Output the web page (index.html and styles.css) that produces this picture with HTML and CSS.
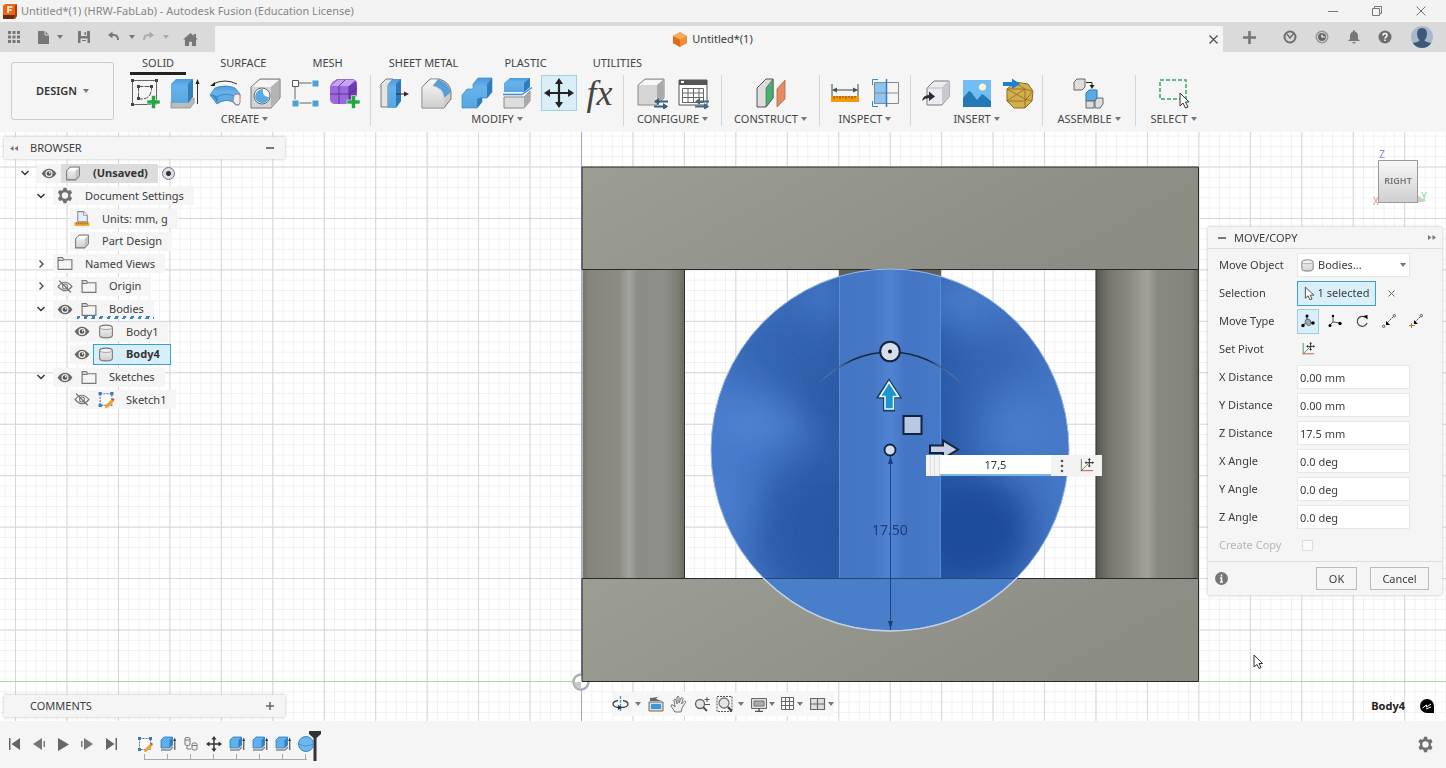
FILE: index.html
```html
<!DOCTYPE html>
<html lang="en">
<head>
<meta charset="utf-8">
<title>Untitled*(1) (HRW-FabLab) - Autodesk Fusion (Education License)</title>
<link rel="stylesheet" href="styles.css">
</head>
<body>
<svg class="sprite" aria-hidden="true">
  <defs>
    <linearGradient id="gBlue" x1="0" y1="0" x2="0" y2="1"><stop offset="0" stop-color="#4a9add"/><stop offset=".3" stop-color="#67b2ea"/><stop offset="1" stop-color="#58a6e2"/></linearGradient>
    <linearGradient id="gGray" x1="0" y1="0" x2="0" y2="1"><stop offset="0" stop-color="#f8f8f8"/><stop offset="1" stop-color="#cfcfcf"/></linearGradient>
  </defs>
  <symbol id="i-caret" viewBox="0 0 6 6"><path d="M0 1h6L3 5z" fill="currentColor"/></symbol>
  <symbol id="i-down" viewBox="0 0 16 16"><path d="M4.500 6l3.500 3.500L11.500 6" fill="none" stroke="#333" stroke-width="1.500"/></symbol>
  <symbol id="i-right" viewBox="0 0 16 16"><path d="M6.500 4.500L10 8l-3.500 3.500" fill="none" stroke="#444" stroke-width="1.300"/></symbol>
  <symbol id="i-eye" viewBox="0 0 16 16"><path d="M1 8q3-4.500 7-4.500T15 8q-3 4.500-7 4.500T1 8z" fill="#666"/><circle cx="8" cy="8" r="3.300" fill="#f5f5f5"/><circle cx="8" cy="8" r="2.200" fill="#555"/><circle cx="8.700" cy="7.300" r=".8" fill="#fff"/></symbol>
  <symbol id="i-hidden" viewBox="0 0 16 16"><path d="M1.500 8Q5 4 8 4t6.500 4Q11 12 8 12T1.500 8z" fill="none" stroke="#777" stroke-width="1.100"/><circle cx="8" cy="8" r="2.300" fill="none" stroke="#777"/><path d="M2.500 2.500l11 11" stroke="#666" stroke-width="1.200"/></symbol>
  <symbol id="i-folder" viewBox="0 0 16 16"><path d="M1.500 13.500v-11h4l1.500 2h7.500v9zM1.500 5h5" fill="none" stroke="#777" stroke-width="1.100"/></symbol>
  <symbol id="i-part" viewBox="0 0 16 16"><path d="M2 5.500L5.500 2H14v8l-3.500 4H2z" fill="url(#gGray)" stroke="#777" stroke-linejoin="round"/><path d="M2.500 5.500L5.500 2.500H13.500L10.500 5.500z" fill="#fff"/><path d="M10.500 5.500L13.500 3v7l-3 3.500z" fill="#c4c4c4"/></symbol>
  <symbol id="i-body" viewBox="0 0 16 16"><path d="M2 4.500Q2 2 8 2t6 2.500v7Q14 14 8 14t-6-2.500z" fill="url(#gGray)" stroke="#777"/><path d="M2.500 5Q4 6.200 8 6.200T13.500 5" fill="none" stroke="#aaa"/></symbol>
  <symbol id="i-units" viewBox="0 0 16 16"><path d="M4 11V1.500h5.500L13 5v6z" fill="#e6eef9" stroke="#889"/><path d="M9.500 1.500V5H13" fill="#fff" stroke="#99a"/><path d="M1 11.500h14v3.500H1z" fill="#f0a72e"/><path d="M3 11.500v2m2-2v2m2-2v2m2-2v2m2-2v2m2-2v2" stroke="#966312"/></symbol>
  <symbol id="i-gear" viewBox="0 0 16 16"><path d="M6.600.8h2.800l.5 2.100 1.300.7 2-.7 1.400 2.400L13.100 7v2l1.500 1.700-1.400 2.400-2-.7-1.300.7-.5 2.100H6.600l-.5-2.100-1.300-.7-2 .7-1.400-2.400L2.900 9V7L1.400 5.300l1.400-2.400 2 .7 1.300-.7z" fill="#707070"/><circle cx="8" cy="8" r="3" fill="#f5f5f5"/></symbol>
  <symbol id="i-sketch" viewBox="0 0 16 16"><path d="M2.500 2.500h11v11h-11z" fill="#fff" stroke="#4a78a8" stroke-dasharray="2 1"/><path d="M1 1h3v3H1zM12 1h3v3h-3zM1 12h3v3H1z" fill="#4078b8"/><path d="M7.500 13.500L13.500 7.500l2 2-5.500 6-3 .5z" fill="#f0a030"/><path d="M13 8l1.500-1.500 1.500 1.500-1 1.500z" fill="#d84848"/></symbol>
  <symbol id="i-pivot" viewBox="0 0 16 16"><path d="M2.500 1v13" stroke="#4a8a4a"/><path d="M2 13.500h13" stroke="#c44"/><path d="M3 13L10 6" stroke="#6a8a6a"/><path d="M11 0l1.500 2H9.500zM11 10l1.500-2h-3zM6 5l2-1.500v3zM16 5l-2-1.500v3z" fill="#222"/><path d="M11 1.500v7M7.500 5h7" stroke="#222"/></symbol>
  <symbol id="i-extrude16" viewBox="0 0 16 16"><path d="M1 14h9l3-3" stroke="#888" stroke-width="1.500" fill="none"/><path d="M1 4l3-3h8.500v8l-3 3H1z" fill="#62aeea" stroke="#287bbd" stroke-width=".8"/><path d="M9.500 4.500L12.500 1v8l-3 3z" fill="#2d7fc2"/><path d="M14.800 14V4" stroke="#333"/><path d="M13.200 5L14.800 1.500 16 5z" fill="#333"/></symbol>
  <symbol id="i-move16" viewBox="0 0 16 16"><path d="M8 2v12M2 8h12" stroke="#333" stroke-width="1.500"/><path d="M8 0l2.500 3.500h-5zM8 16l2.500-3.500h-5zM0 8l3.500-2.500v5zM16 8l-3.500-2.500v5z" fill="#333"/></symbol>
  <symbol id="i-cursor" viewBox="0 0 12 16"><path d="M1.500 1v12l3-2.500 2 4.500 2.300-1-2-4.200h4z" fill="#fff" stroke="#444"/></symbol>
</svg>

<div class="app">
  <header class="titlebar">
    <svg width="14" height="15" viewBox="0 0 14 15"><path d="M0 2L2 0h12v12l-2 3H0z" fill="#ef6411"/><path d="M0 11h12l-1 4H0z" fill="#6b2a12"/><path d="M12 2l2-2v12l-2 3z" fill="#a93d10"/><path d="M5 9V3h4.500M5 6h3.500" stroke="#fff" stroke-width="1.600" fill="none"/></svg>
    <h1>Untitled*(1) (HRW-FabLab) - Autodesk Fusion (Education License)</h1>
    <div class="window-controls">
      <button aria-label="Minimize"><svg width="10" height="10"><path d="M0 5.500h10" stroke="#777"/></svg></button>
      <button aria-label="Restore"><svg width="10" height="10" fill="none" stroke="#777"><path d="M.5 2.500h7v7h-7zM2.500 2.500v-2h7v7h-2"/></svg></button>
      <button aria-label="Close"><svg width="10" height="10"><path d="M.5.500l9 9m0-9l-9 9" stroke="#777"/></svg></button>
    </div>
  </header>

  <div class="tabbar">
    <div class="quick">
      <button aria-label="Data panel"><svg width="12" height="12" fill="#777"><path d="M0 0h3v3H0zM4.500 0h3v3h-3zM9 0h3v3H9zM0 4.500h3v3H0zM4.500 4.500h3v3h-3zM9 4.500h3v3H9zM0 9h3v3H0zM4.500 9h3v3h-3zM9 9h3v3H9z"/></svg></button>
      <button class="file" aria-label="File"><svg width="11" height="13"><path d="M0 0h7l4 4v9H0z" fill="#777"/><path d="M7 0v4h4" stroke="#ddd" fill="none"/></svg><svg class="caret"><use href="#i-caret"/></svg></button>
      <button class="save" aria-label="Save"><svg width="12" height="12"><path d="M0 0h12v12H0z" fill="#777"/><path d="M3 0h6v5H3zM2.500 7.500h7V12h-7z" fill="#ddd"/><path d="M6.500 1h1.500v3H6.500zM4 9h4v1H4z" fill="#777"/></svg></button>
      <button class="undo" aria-label="Undo"><svg width="12" height="12"><path d="M3 4h3q4 0 4 5" stroke="#777" stroke-width="2" fill="none"/><path d="M0 4l4.500-3.500v7z" fill="#777"/></svg><svg class="caret"><use href="#i-caret"/></svg></button>
      <button class="redo" aria-label="Redo"><svg width="12" height="12"><path d="M9 4H6Q2 4 2 9" stroke="#aaa" stroke-width="2" fill="none"/><path d="M12 4L7.500.500v7z" fill="#aaa"/></svg><svg class="caret"><use href="#i-caret"/></svg></button>
      <button class="home" aria-label="Home"><svg width="15" height="13" viewBox="0 0 16 14" fill="#777"><path d="M8 0l8 7h-2v7H9.500V9.500h-3V14H2V7H0zM11.500 1H14v4l-2.500-2z"/></svg></button>
    </div>
    <div class="doc-tab">
      <div class="doc-name"><svg width="14" height="15"><path d="M0 4l7-4 7 4v7l-7 4-7-4z" fill="#f08b32"/><path d="M0 4l7 3.500V15l-7-4z" fill="#e26a1b"/><path d="M0 4l7-4 7 4-7 3.500z" fill="#f9ab5c"/></svg>Untitled*(1)</div>
      <button aria-label="Close tab"><svg width="9" height="9"><path d="M.5.500l8 8m0-8l-8 8" stroke="#555" stroke-width="1.400"/></svg></button>
    </div>
    <div class="account">
      <button class="add" aria-label="New tab"><svg width="13" height="13"><path d="M6.500 0v13M0 6.500h13" stroke="#777" stroke-width="2.600"/></svg></button>
      <button aria-label="Extensions"><svg width="14" height="14"><circle cx="7" cy="7" r="5.500" fill="none" stroke="#6e6e6e" stroke-width="2"/><path d="M4 4l3 4 4-5" stroke="#6e6e6e" stroke-width="1.500" fill="none"/></svg></button>
      <button aria-label="Job status"><svg width="14" height="14"><circle cx="7" cy="7" r="6.500" fill="#999"/><circle cx="7" cy="7" r="4.500" fill="#666" stroke="#ddd"/><path d="M7 4.500V7h3" stroke="#fff" fill="none" stroke-width="1.200"/></svg></button>
      <button aria-label="Notifications"><svg width="12" height="14" fill="#777"><path d="M6 0q1 0 1 1.500Q10 2.500 10 6v3l2 2H0l2-2V6q0-3.500 3-4.500Q5 0 6 0zM4 12h4q-2 3-4 0z"/></svg></button>
      <button aria-label="Help"><svg width="14" height="14"><circle cx="7" cy="7" r="6.500" fill="#6e6e6e"/><path d="M5 5.500Q5 3.500 7 3.500t2 2Q9 6.500 7 8v.5M7 9.500v1.500" stroke="#fff" stroke-width="1.500" fill="none"/></svg></button>
      <button class="avatar" aria-label="Profile"><svg width="22" height="22"><clipPath id="av"><circle cx="11" cy="11" r="11"/></clipPath><g clip-path="url(#av)"><path d="M0 0h22v22H0z" fill="#a9b8ce"/><path d="M11 2q5 0 5 6 0 4-2.500 6 0 2 7.500 3v6H1v-6q7.500-1 7.500-3Q6 12 6 8q0-6 5-6z" fill="#3f5878"/></g></svg></button>
    </div>
  </div>

  <div class="ribbon">
    <button class="workspace">DESIGN <svg class="caret"><use href="#i-caret"/></svg></button>
    <div class="ribbon-main">
      <nav class="tabs">
        <a href="#solid" class="active">SOLID</a><a href="#surface">SURFACE</a><a href="#mesh">MESH</a><a href="#sheet">SHEET METAL</a><a href="#plastic">PLASTIC</a><a href="#utilities">UTILITIES</a>
      </nav>
      <div class="groups">
        <section class="group g-create">
          <div class="tools">
            <button aria-label="Create sketch"><svg viewBox="0 0 32 32"><path d="M3.500 3.500h24v24h-24z" fill="none" stroke="#666"/><path d="M2 2h3v3H2zM26 2h3v3h-3zM2 26h3v3H2z" fill="#444"/><path d="M9.500 9.500h13v3q-1 9-9 9.500h-4z" fill="none" stroke="#555" stroke-dasharray="5 1"/><path d="M8 8h3v3H8zM21 8h3v3h-3zM8 20h3v3H8z" fill="#444"/><path d="M22.500 18.500h4v4.500h4.500v4h-4.500v4.500h-4V27H18v-4h4.500z" fill="#21a845" stroke="#f5f5f5" stroke-width=".6"/></svg></button>
            <button aria-label="Extrude"><svg viewBox="0 0 32 32"><path d="M2 25h18l5-4v5l-4 5H2z" fill="#bbb" stroke="#888" stroke-width=".7"/><path d="M2 7l5-5h17v18l-5 6H2z" fill="url(#gBlue)"/><path d="M19 7l5-5v18l-5 6z" fill="#337fb9"/><path d="M28.500 27V6" stroke="#333"/><path d="M26.500 7l2-5 2 5z" fill="#222"/></svg></button>
            <button aria-label="Revolve"><svg viewBox="0 0 32 32"><path d="M4 7Q16 1 28 7" fill="none" stroke="#333"/><path d="M1 9l5-4v4z" fill="#222"/><path d="M1 18l5-7q10-4 20 0l5 6-1 11q-4 1-6-3-8-4-16 2z" fill="url(#gBlue)" stroke="#3282bd" stroke-width=".8"/><path d="M1 18q5 2 7 8l1-4Q7 17 1 18z" fill="#3c87c4"/><path d="M8 20q8-5 17-1" stroke="#3c87c4" fill="none"/><path d="M25 18q4-2 6 0v8l-2 2q-3 0-5-4z" fill="#eee" stroke="#a66" stroke-width=".8"/></svg></button>
            <button aria-label="Hole"><svg viewBox="0 0 32 32"><path d="M2 10l9-8h20v19l-9 10H2z" fill="#d4d4d4" stroke="#777"/><path d="M3 10l8-7h19l-8 7z" fill="#f5f5f5"/><path d="M22 10l8-7v18l-8 9z" fill="#b4b4b4"/><circle cx="13" cy="19" r="8" fill="#fff" stroke="#666"/><path d="M14 12q-1 8 6 8-1 6-7 6-7-1-7-7 1-6 8-7z" fill="#5aa9e2"/></svg></button>
            <button aria-label="Pattern"><svg viewBox="0 0 32 32"><path d="M6 6h20M6 6v20h20" fill="none" stroke="#666"/><path d="M3.500 3.500h6v6h-6z" fill="#fff" stroke="#555"/><path d="M23 3h7v7h-7zM3 23h7v7H3zM23 23h7v7h-7z" fill="#4f9fd8" stroke="#f5f5f5"/></svg></button>
            <button aria-label="Create form"><svg viewBox="0 0 32 32"><path d="M1 10Q2 5 8 2h16q4 1 4 5v11q-2 6-7 9H5q-4-1-4-5z" fill="#9c68df"/><path d="M3 8l6-5h17l-6 6H3z" fill="#c8a3f2"/><path d="M20 9l7-5q2 12-1 16l-6 5z" fill="#6d3db0"/><path d="M1 17h19l8-6M10 9v18M10 9l6-6M20 9v16" stroke="#57318c" fill="none" stroke-width=".9"/><path d="M22.500 18.500h4v4.500h4.500v4h-4.500v4.500h-4V27H18v-4h4.500z" fill="#21a845" stroke="#f5f5f5" stroke-width=".6"/></svg></button>
          </div>
          <button class="menu">CREATE<svg class="caret"><use href="#i-caret"/></svg></button>
        </section>
        <section class="group g-modify">
          <div class="tools">
            <button aria-label="Press pull"><svg viewBox="0 0 32 32"><path d="M2 7l5-5h7L9 8v22H2z" fill="#e4e4e4" stroke="#777"/><path d="M9 7l5-5h8v22l-5 7H9z" fill="url(#gBlue)"/><path d="M17 7l5-5v22l-5 7z" fill="#2b79b8"/><path d="M17 17h10" stroke="#333"/><path d="M25 14.500l5 2.500-5 2.500z" fill="#422"/></svg></button>
            <button aria-label="Fillet"><svg viewBox="0 0 32 32"><path d="M2 10l8-8h9q11 3 12 13v7l-7 9H2z" fill="#ccc" stroke="#777"/><path d="M2.500 10l8-7.500h7l-5 6.500q10 3 11.500 12v9.500H2.500z" fill="url(#gGray)"/><path d="M18 2.500q11 3 12.500 13l-6 5q-1.500-10-11.500-12z" fill="#579fd9"/></svg></button>
            <button aria-label="Combine"><svg viewBox="0 0 32 32"><path d="M1 18l5-6h6V7l5-6h14v14l-5 6h-5v4l-5 6H1z" fill="url(#gBlue)" stroke="#2d7fbd" stroke-width=".6"/><path d="M26 7l5-6v14l-5 6z" fill="#2f7dbb"/><path d="M16 22l5-2v5l-5 6z" fill="#2f7dbb"/></svg></button>
            <button aria-label="Split body"><svg viewBox="0 0 32 32"><path d="M2 6l6-5h20v9l-6 5H2z" fill="url(#gBlue)"/><path d="M22 6l6-5v9l-6 5z" fill="#2f7dbb"/><path d="M1 17.500h19l10-7" stroke="#3991d4" stroke-width="1.500" fill="none"/><path d="M2 20h20l6-6v10l-6 7H2z" fill="#ddd" stroke="#888"/><path d="M22 20l6-6v10l-6 7z" fill="#aaa"/></svg></button>
            <button class="selected" aria-label="Move/Copy"><svg viewBox="0 0 32 32"><path d="M16 5v22M5 16h22" stroke="#222" stroke-width="2.200"/><path d="M16 1l4 6h-8zM16 31l4-6h-8zM1 16l6-4v8zM31 16l-6-4v8z" fill="#222"/></svg></button>
            <button class="fx" aria-label="Change parameters">fx</button>
          </div>
          <button class="menu">MODIFY<svg class="caret"><use href="#i-caret"/></svg></button>
        </section>
        <section class="group g-pair">
          <div class="tools">
            <button aria-label="Configure"><svg viewBox="0 0 32 32"><path d="M2 8l7-6h19v19l-7 7H2z" fill="#d5d5d5" stroke="#888"/><path d="M3 8l6-5h18l-6 5z" fill="#f6f6f6"/><path d="M21 8l6-5v18l-6 6z" fill="#aaa"/><path d="M19 24.500h13M18 29.500h13" stroke="#38607a" stroke-width="2"/><path d="M23 21v7l-5-3.500zM27 26v7l5-3.500z" fill="#38607a"/></svg></button>
            <button aria-label="Configuration table"><svg viewBox="0 0 32 32"><path d="M2 3h28v25H2z" fill="#fff" stroke="#555"/><path d="M2 3h28v5H2z" fill="#555"/><path d="M4 4h3v2H4z" fill="#fff"/><path d="M5.500 11.500h21v14h-21zM5.500 16h21M5.500 20.500h21M11 11.500v14M16.500 11.500v14M22 11.500v14" fill="none" stroke="#666"/><path d="M19 24.500h13M18 29.500h13" stroke="#456a80" stroke-width="2"/><path d="M23 21v7l-5-3.500zM27 26v7l5-3.500z" fill="#456a80"/></svg></button>
          </div>
          <button class="menu">CONFIGURE<svg class="caret"><use href="#i-caret"/></svg></button>
        </section>
        <section class="group g-pair">
          <div class="tools"><button aria-label="Offset plane"><svg viewBox="0 0 32 32"><path d="M2 11l9-9h7v19l-7 9H2z" fill="#ddd" stroke="#555"/><path d="M11 11l7-9v19l-7 9z" fill="#45b070" stroke="#555" stroke-width=".6"/><path d="M22 12l8-9v19l-8 8z" fill="#e88a5c" stroke="#a65" stroke-width=".8"/></svg></button></div>
          <button class="menu">CONSTRUCT<svg class="caret"><use href="#i-caret"/></svg></button>
        </section>
        <section class="group g-inspect">
          <div class="tools">
            <button aria-label="Measure"><svg viewBox="0 0 32 32"><path d="M3 7v12M29 7v12M4 13h24" stroke="#444"/><path d="M3 13l5-2.500v5zM29 13l-5-2.500v5z" fill="#3a5a45"/><path d="M2 19h28v6H2z" fill="#f49a0d"/><path d="M5 19v3m3-3v2m3-2v3m3-3v2m3-2v3m3-3v2m3-2v3m3-3v2" stroke="#7b4b05"/></svg></button>
            <button aria-label="Section analysis"><svg viewBox="0 0 32 32"><path d="M4 5h12v22H4z" fill="#8cc5f2"/><path d="M4.500 5.500h24v21h-24zM4.500 16h24" fill="none" stroke="#888"/><path d="M16.500 2v28" stroke="#2c7ec0" stroke-width="1.500"/><path d="M2.500 8V2.500H8M2.500 24v5.500H8" stroke="#2c8bd0" fill="none"/></svg></button>
          </div>
          <button class="menu">INSPECT<svg class="caret"><use href="#i-caret"/></svg></button>
        </section>
        <section class="group g-insert">
          <div class="tools">
            <button aria-label="Insert derive"><svg viewBox="0 0 32 32"><path d="M7 11l7-7h15v16l-7 8H7z" fill="#ececf0" stroke="#777"/><path d="M7 11h15l7-7" fill="none" stroke="#bbb"/><path d="M22 11l7-7v16l-7 8z" fill="#c8c8cf"/><path d="M2 24q1-6 7-6v-3.500l6 5-6 4.500v-3q-4 0-7 3z" fill="#2d2d33"/></svg></button>
            <button aria-label="Insert image"><svg viewBox="0 0 32 32"><path d="M2 3h28v27H2z" fill="#72bef4"/><circle cx="21.500" cy="10" r="3.500" fill="#fff6cf"/><path d="M2 21l6-7 2 1 6 8 5-6 3 2 6 5v6H2z" fill="#2378b5"/></svg></button>
            <button aria-label="Insert mesh"><svg viewBox="0 0 32 32"><path d="M5 12l8-7 13 2 5 7-1 10-7 7H12l-7-7z" fill="#d3ae4e" stroke="#8b6b20"/><path d="M5 12h18l7 2M23 12v19M5 12l18 10M5 24h18l7-9M5 24l18-12M23 22l7 2M12 5l11 7" stroke="#8b6b20" stroke-width=".8" fill="none"/><path d="M1 5h9V1.500L18 7l-8 5V9H1z" fill="#1b80d4"/></svg></button>
          </div>
          <button class="menu">INSERT<svg class="caret"><use href="#i-caret"/></svg></button>
        </section>
        <section class="group g-assemble">
          <div class="tools"><button aria-label="New component"><svg viewBox="0 0 32 32"><path d="M1 5l3-3h8v8l-3 3H1z" fill="#ddd" stroke="#666"/><path d="M13 5.500h6v4" fill="none" stroke="#222"/><path d="M16.500 8h5L19 12z" fill="#222"/><path d="M13 16l3-3h8v8l-3 3h-8z" fill="#5aaae4" stroke="#2977b2"/><path d="M13 24h8v7h-8z" fill="#ddd" stroke="#666"/><path d="M22 24l2-3h6v6l-3 4h-5z" fill="#ddd" stroke="#666"/></svg></button></div>
          <button class="menu">ASSEMBLE<svg class="caret"><use href="#i-caret"/></svg></button>
        </section>
        <section class="group g-select">
          <div class="tools"><button aria-label="Select"><svg viewBox="0 0 32 32"><path d="M2 3h26v19H2z" fill="none" stroke="#35a566" stroke-width="1.500" stroke-dasharray="4 2"/><path d="M22 16v13l3-3 2.500 5 2.500-1-2.500-5H31z" fill="#fff" stroke="#333"/></svg></button></div>
          <button class="menu">SELECT<svg class="caret"><use href="#i-caret"/></svg></button>
        </section>
      </div>
    </div>
  </div>

  <main class="viewport">
    <svg class="scene" viewBox="0 132 1446 589" preserveAspectRatio="xMidYMid slice">
      <defs>
        <pattern id="minor" patternUnits="userSpaceOnUse" x="581" y="681" width="10.290" height="10.290"><path d="M0 .5h10.290M.5 0v10.290" stroke="#f1f1f1"/></pattern>
        <pattern id="major" patternUnits="userSpaceOnUse" x="581" y="681" width="51.450" height="51.450"><path d="M0 .5h51.450M.5 0v51.450" stroke="#d6d6d6"/></pattern>
        <linearGradient id="slab" x1="0" y1="0" x2="1" y2=".3"><stop offset="0" stop-color="#9c9d95"/><stop offset="1" stop-color="#8b8c84"/></linearGradient>
        <linearGradient id="pillarL"><stop offset="0" stop-color="#74756e"/><stop offset=".06" stop-color="#86847c"/><stop offset=".36" stop-color="#8d8a83"/><stop offset=".46" stop-color="#a3a49e"/><stop offset=".55" stop-color="#8a8c86"/><stop offset=".8" stop-color="#8c8e87"/><stop offset=".94" stop-color="#7b7d75"/><stop offset="1" stop-color="#68695f"/></linearGradient>
        <linearGradient id="pillarR"><stop offset="0" stop-color="#54554e"/><stop offset=".12" stop-color="#76766e"/><stop offset=".34" stop-color="#8d8a83"/><stop offset=".5" stop-color="#a3a39a"/><stop offset=".6" stop-color="#888981"/><stop offset=".93" stop-color="#83847b"/><stop offset="1" stop-color="#66675e"/></linearGradient>
        <linearGradient id="strip"><stop offset="0" stop-color="#4475c4"/><stop offset=".35" stop-color="#4678c6"/><stop offset=".5" stop-color="#5084d2"/><stop offset=".65" stop-color="#4475c5"/><stop offset="1" stop-color="#4679c8"/></linearGradient>
        <linearGradient id="lobeL" x1="0" y1="0" x2="1" y2="0"><stop offset="0" stop-color="#4679c9"/><stop offset=".4" stop-color="#4173c4"/><stop offset="1" stop-color="#2d5da9"/></linearGradient>
        <linearGradient id="lobeR" x1="0" y1="0" x2="1" y2="0"><stop offset="0" stop-color="#2b5ba8"/><stop offset=".55" stop-color="#3f70bf"/><stop offset="1" stop-color="#477ac9"/></linearGradient>
        <linearGradient id="arcFade"><stop offset="0" stop-color="#b9c8df" stop-opacity="0"/><stop offset=".22" stop-color="#16283f"/><stop offset=".78" stop-color="#16283f"/><stop offset="1" stop-color="#b9c8df" stop-opacity="0"/></linearGradient>
        <clipPath id="disc"><ellipse cx="890" cy="450" rx="179" ry="181"/></clipPath>
        <filter id="soft" x="-60%" y="-60%" width="220%" height="220%"><feGaussianBlur stdDeviation="18"/></filter>
      </defs>
      <rect y="132" width="1446" height="589" fill="#fff"/>
      <rect y="132" width="1446" height="589" fill="url(#minor)"/>
      <rect y="132" width="1446" height="589" fill="url(#major)"/>
      <path d="M0 681.500h1446" stroke="#a4dba4"/>
      <path d="M581.500 132v589" stroke="#a3a1ee"/>
      <circle cx="581" cy="682" r="7.500" fill="#fff" stroke="#aab0b0" stroke-width="2.500"/><path d="M581 682v7a7 7 0 0 1-7-7z" fill="#c5caca"/>
      <rect x="582.500" y="269" width="102" height="309" fill="url(#pillarL)"/>
      <rect x="1096" y="269" width="102" height="309" fill="url(#pillarR)"/>
      <rect x="839" y="269" width="102" height="40" fill="#5f6058"/>
      <path d="M684.500 269v309M1096 269v309M1198.500 269v309" stroke="#33342f"/>
      <path d="M582 167h616.500v102.500H582z" fill="url(#slab)" stroke="#292a27"/>
      <path d="M582 578.500h616.500v103H582z" fill="url(#slab)" stroke="#292a27"/>
      <g clip-path="url(#disc)">
        <path d="M700 260h380v380H700z" fill="#4a7dca"/>
        <path d="M700 260h139v318H700z" fill="url(#lobeL)"/>
        <path d="M941 260h139v318H941z" fill="url(#lobeR)"/>
        <g filter="url(#soft)">
          <ellipse cx="790" cy="350" rx="65" ry="35" fill="#2e5fab" opacity=".7"/>
          <ellipse cx="825" cy="400" rx="35" ry="20" fill="#2858a4" opacity=".9"/>
          <ellipse cx="755" cy="424" rx="48" ry="18" fill="#5287d6"/>
          <ellipse cx="725" cy="500" rx="20" ry="45" fill="#4c80cf"/>
          <ellipse cx="815" cy="530" rx="60" ry="65" fill="#2556a2" opacity=".8"/>
          <ellipse cx="825" cy="295" rx="22" ry="25" fill="#4a7dca"/>
          <ellipse cx="965" cy="300" rx="45" ry="28" fill="#4a7dca"/>
          <ellipse cx="1000" cy="358" rx="40" ry="20" fill="#3262af" opacity=".7"/>
          <ellipse cx="1020" cy="430" rx="35" ry="36" fill="#4a7dcb"/>
          <ellipse cx="970" cy="530" rx="65" ry="52" fill="#1c4c98"/>
          <ellipse cx="1055" cy="530" rx="14" ry="60" fill="#4578c8"/>
        </g>
        <path d="M839 260h102v318H839z" fill="url(#strip)"/>
        <path d="M839.500 269v309M940.500 269v309" stroke="#5d8cd6"/>
        <path d="M700 578h380v60H700z" fill="#497ecb"/>
        <path d="M700 578.500h380" stroke="#26456f"/>
      </g>
      <ellipse cx="890" cy="450" rx="179" ry="181" fill="none" stroke="#9bbbe8"/>
      <path d="M763 578q54 53 127 53t127-53" fill="none" stroke="#c4d2e8" stroke-width="1.500"/>
      <path d="M818 384Q851 352 890 352T962 384" fill="none" stroke="url(#arcFade)" stroke-width="1.500"/>
      <path d="M890.500 456v174" stroke="#1d4382"/>
      <path d="M888 464l2.500-8 2.500 8zM888 621l2.500 8 2.500-8z" fill="#1b3d75"/>
      <text class="dimension" x="890" y="535">17.50</text>
      <circle cx="890" cy="351.500" r="9.800" fill="#d5deed" stroke="#14233a" stroke-width="2"/><circle cx="890" cy="351.500" r="2" fill="#111"/>
      <circle cx="890" cy="450" r="5.500" fill="#d5deed" stroke="#14233a" stroke-width="1.800"/>
      <path d="M889 381l10.500 16h-6v13h-9v-13h-6z" fill="#1692d0" stroke="#14405f" stroke-width="3"/>
      <path d="M889 382l9.500 14.500h-5v12.500h-8.500v-12.500h-5z" fill="#1a95d2" stroke="#e9f7ff" stroke-width="1.600"/>
      <path d="M903.500 416h18v18h-18z" fill="#b9c8e4" stroke="#14233a" stroke-width="2"/>
      <path d="M930 445.500h13v-5l15 9-15 9v-5.500h-13z" fill="#c5d0e4" stroke="#14233a" stroke-width="2"/>
      <g class="cube">
        <path d="M1384 203h32l10-2-9-6z" fill="#ccc"/>
        <path d="M1378.500 160.500h39v42h-39z" fill="url(#gGray)" stroke="#999"/>
        <text class="face" x="1398" y="184">RIGHT</text>
        <text class="axis-z" x="1382" y="158">Z</text><text class="axis-x" x="1376" y="205">X</text><text class="axis-y" x="1424" y="200">Y</text>
      </g>
      <path d="M1254 655v12l3-2.500 2 4 2-1-2-4h3.500z" fill="#fff" stroke="#333"/>
    </svg>

    <aside class="browser">
      <header class="bar"><svg width="8" height="7"><path d="M3.500 1v5L0 3.500zM8 1v5L4.500 3.500z" fill="#777"/></svg><h2>BROWSER</h2><button aria-label="Collapse"><svg width="8" height="2"><path d="M0 1h8" stroke="#777" stroke-width="2"/></svg></button></header>
      <ul class="tree">
        <li><svg class="chev"><use href="#i-down"/></svg><span class="node root"><svg class="ico"><use href="#i-eye"/></svg><span class="item"><svg class="ico"><use href="#i-part"/></svg><b>(Unsaved)</b></span></span><input type="radio" checked aria-label="Activate component"></li>
        <li class="l2"><svg class="chev"><use href="#i-down"/></svg><span class="node"><span class="item"><svg class="ico"><use href="#i-gear"/></svg>Document Settings</span></span></li>
        <li class="l3"><span class="node"><span class="item"><svg class="ico"><use href="#i-units"/></svg>Units: mm, g</span></span></li>
        <li class="l3"><span class="node"><span class="item"><svg class="ico"><use href="#i-part"/></svg>Part Design</span></span></li>
        <li class="l2"><svg class="chev"><use href="#i-right"/></svg><span class="node"><span class="item"><svg class="ico"><use href="#i-folder"/></svg>Named Views</span></span></li>
        <li class="l2"><svg class="chev"><use href="#i-right"/></svg><span class="node"><svg class="ico"><use href="#i-hidden"/></svg><span class="item"><svg class="ico"><use href="#i-folder"/></svg>Origin</span></span></li>
        <li class="l2"><svg class="chev"><use href="#i-down"/></svg><span class="node"><svg class="ico"><use href="#i-eye"/></svg><span class="item dashed"><svg class="ico"><use href="#i-folder"/></svg>Bodies</span></span></li>
        <li class="l3"><span class="node"><svg class="ico"><use href="#i-eye"/></svg><span class="item"><svg class="ico"><use href="#i-body"/></svg>Body1</span></span></li>
        <li class="l3"><span class="node"><svg class="ico"><use href="#i-eye"/></svg><span class="item picked"><svg class="ico"><use href="#i-body"/></svg><b>Body4</b></span></span></li>
        <li class="l2"><svg class="chev"><use href="#i-down"/></svg><span class="node"><svg class="ico"><use href="#i-eye"/></svg><span class="item"><svg class="ico"><use href="#i-folder"/></svg>Sketches</span></span></li>
        <li class="l3"><span class="node"><svg class="ico"><use href="#i-hidden"/></svg><span class="item"><svg class="ico"><use href="#i-sketch"/></svg>Sketch1</span></span></li>
      </ul>
    </aside>

    <section class="comments bar"><h2>COMMENTS</h2><button aria-label="Add comment"><svg width="8" height="8"><path d="M4 0v8M0 4h8" stroke="#666" stroke-width="1.500"/></svg></button></section>

    <form class="value-box">
      <span class="grip"></span>
      <input type="text" value="17,5" aria-label="Z distance" autofocus>
      <button type="button" aria-label="More"><svg width="4" height="14" fill="#555"><circle cx="2" cy="2" r="1.300"/><circle cx="2" cy="7" r="1.300"/><circle cx="2" cy="12" r="1.300"/></svg></button>
      <button type="button" aria-label="Set pivot"><svg width="15" height="15"><use href="#i-pivot"/></svg></button>
    </form>

    <form class="dialog">
      <header><svg width="8" height="2"><path d="M0 1h8" stroke="#777" stroke-width="2"/></svg><h2>MOVE/COPY</h2><svg width="8" height="7"><path d="M0 1v5l3.500-2.500zM4.500 1v5L8 3.500z" fill="#777"/></svg></header>
      <div class="fields">
        <label for="object">Move Object</label><div class="select"><svg width="15" height="15"><use href="#i-body"/></svg><select id="object"><option>Bodies...</option></select><svg class="caret"><use href="#i-caret"/></svg></div>
        <span>Selection</span><div class="row"><button type="button" class="selection"><svg width="11" height="15"><use href="#i-cursor"/></svg>1 selected</button><button type="button" class="clear" aria-label="Clear selection"><svg width="7" height="7"><path d="M.5.500l6 6m0-6l-6 6" stroke="#666"/></svg></button></div>
        <span>Move Type</span><div class="row types">
          <button type="button" class="on" aria-label="Free move"><svg width="14" height="14"><path d="M6 2v6l6 1M6 8l-5 4" stroke="#333" fill="none"/><path d="M4 8q0-3 3-3t3 4-4 2z" fill="#9ab" stroke="#555" stroke-width=".8"/><circle cx="6" cy="2" r="1.500"/><circle cx="12" cy="9" r="1.700"/><circle cx="2" cy="11.500" r="1.700"/></svg></button>
          <button type="button" aria-label="Translate"><svg width="14" height="14"><path d="M5 2v6l7 1M5 8l-4 4" stroke="#555" fill="none"/><circle cx="5" cy="2" r="1.200"/><circle cx="12" cy="9.500" r="1.700"/><circle cx="2" cy="11.500" r="1.500"/></svg></button>
          <button type="button" aria-label="Rotate"><svg width="14" height="14"><path d="M10.500 3.500A5 5 0 1 0 12 9" stroke="#444" fill="none" stroke-width="1.200"/><path d="M8.500 2l4-1v4.500z"/></svg></button>
          <button type="button" aria-label="Point to point"><svg width="14" height="14"><path d="M11 3L4 10" stroke="#444" stroke-dasharray="2 1"/><path d="M4 7v4h4z"/><circle cx="1.700" cy="12.300" r="1.200" fill="none" stroke="#555"/><circle cx="12.300" cy="1.700" r="1.200" fill="none" stroke="#555"/></svg></button>
          <button type="button" aria-label="Point to position"><svg width="14" height="14"><path d="M11 3L5 9" stroke="#444" stroke-dasharray="2 1"/><path d="M5 6v4h4z"/><path d="M2.500 9v5M0 11.500h6" stroke="#a73"/><circle cx="12.300" cy="1.700" r="1.200" fill="none" stroke="#555"/></svg></button>
        </div>
        <span>Set Pivot</span><div class="row types"><button type="button" aria-label="Set pivot"><svg width="14" height="14"><use href="#i-pivot"/></svg></button></div>
        <label for="xd">X Distance</label><input id="xd" value="0.00 mm">
        <label for="yd">Y Distance</label><input id="yd" value="0.00 mm">
        <label for="zd">Z Distance</label><input id="zd" value="17.5 mm">
        <label for="xa">X Angle</label><input id="xa" value="0.0 deg">
        <label for="ya">Y Angle</label><input id="ya" value="0.0 deg">
        <label for="za">Z Angle</label><input id="za" value="0.0 deg">
        <label for="copy" class="off">Create Copy</label><input id="copy" type="checkbox" disabled>
      </div>
      <footer><svg width="13" height="13"><circle cx="6.500" cy="6.500" r="6.500" fill="#777"/><path d="M6.500 2.500v2M5 6h1.500v4M5 10h3" stroke="#fff" stroke-width="1.500" fill="none"/></svg><button type="button">OK</button><button type="button" class="cancel">Cancel</button></footer>
    </form>

    <div class="navbar">
      <button class="has-menu" aria-label="Orbit"><svg width="18" height="16"><path d="M8.500 0v16" stroke="#4b9bd6" stroke-dasharray="3 1" stroke-width="1.400"/><path d="M6 4.500Q1 5.500 1 8q0 3.500 7.500 3.500T16 8q0-2.500-5-3.500" fill="none" stroke="#444" stroke-width="1.300"/><path d="M6 9l4 2.500-4 2.500z" fill="#333"/></svg><svg class="caret"><use href="#i-caret"/></svg></button>
      <button aria-label="Look at"><svg width="16" height="16"><path d="M1 6h14v9H1z" fill="#ddd" stroke="#666"/><path d="M3 8h10v5H3z" fill="#3e98d6"/><path d="M2 5V2l8-1-2 2 6 2z" fill="#666"/></svg></button>
      <button aria-label="Pan"><svg width="17" height="17"><path d="M5 16l-4-6q0-2 2-1l2 2-1-7q1-2 2 0l1 4V1q1-1.500 2 0v6l2-5q1.500-1 2 .5L11.500 8l3-3q1.500 0 1 1.500L12 12l-1 4z" fill="#eee" stroke="#777"/></svg></button>
      <button aria-label="Zoom"><svg width="16" height="16"><circle cx="6" cy="8" r="4.500" fill="#e4e4e4" stroke="#666" stroke-width="1.300"/><path d="M9 11l4 4" stroke="#555" stroke-width="2"/><path d="M13 1v5M10.500 3.500h5M11 8.500h5" stroke="#555"/></svg></button>
      <button class="has-menu" aria-label="Zoom window"><svg width="17" height="16"><path d="M1 .5h15v15H1z" fill="none" stroke="#555" stroke-dasharray="2 1"/><circle cx="8" cy="7" r="5" fill="#e4e4e4" stroke="#777" stroke-width="1.300"/><path d="M12 11l3.500 4" stroke="#444" stroke-width="2"/></svg><svg class="caret"><use href="#i-caret"/></svg></button>
      <button class="has-menu tight" aria-label="Display settings"><svg width="16" height="15"><path d="M.5 1.500h15v10H.5z" fill="#ddd" stroke="#666"/><path d="M3 4h10v5H3z" fill="#aaa" stroke="#777"/><path d="M8 12v2M4 14.500h8" stroke="#555" stroke-width="1.500"/></svg><svg class="caret"><use href="#i-caret"/></svg></button>
      <button class="has-menu tight" aria-label="Grid"><svg width="14" height="14"><path d="M.5.500h12v12H.5zM4.500 0v13M8.500 0v13M0 4.500h13M0 8.500h13" fill="none" stroke="#666"/></svg><svg class="caret"><use href="#i-caret"/></svg></button>
      <button class="has-menu tight" aria-label="Viewports"><svg width="16" height="14"><path d="M.5 1.500h14v11H.5zM7.500 1v12M0 7h15" fill="#ddd" stroke="#666" stroke-width="1.200"/></svg><svg class="caret"><use href="#i-caret"/></svg></button>
    </div>

    <div class="status"><b>Body4</b><svg width="14" height="14"><path d="M7 0a7 7 0 0 1 7 7v7H7A7 7 0 0 1 7 0z"/><path d="M2.500 9l4-3v2l4.500-3M6 10l5-2" stroke="#fff" fill="none"/></svg></div>
  </main>

  <footer class="timeline">
    <div class="playback">
      <button aria-label="Go to start"><svg width="12" height="12" fill="#666"><path d="M0 0h1.500v12H0zM11 0v12L2.500 6z"/></svg></button>
      <button aria-label="Step back"><svg width="12" height="12" fill="#777"><path d="M9 0v12L0 6zM10.500 3H12v6h-1.500z"/></svg></button>
      <button aria-label="Play"><svg width="12" height="13" fill="#666"><path d="M1 0v13l11-6.500z"/></svg></button>
      <button aria-label="Step forward"><svg width="12" height="12" fill="#777"><path d="M3 0v12l9-6zM0 3h1.500v6H0z"/></svg></button>
      <button aria-label="Go to end"><svg width="12" height="12" fill="#666"><path d="M10.500 0H12v12h-1.500zM1 0v12l8.500-6z"/></svg></button>
    </div>
    <ol class="features">
      <li><svg><use href="#i-sketch"/></svg></li>
      <li><svg><use href="#i-extrude16"/></svg></li>
      <li><svg viewBox="0 0 16 16"><rect x="2" y="1.500" width="5" height="8" rx="1.500" fill="#eee" stroke="#777"/><rect x="9" y="7" width="5" height="7" rx="1.500" fill="#eee" stroke="#777"/><path d="M2 4h5M9 9.500h5M4 10v3h4" fill="none" stroke="#777"/></svg></li>
      <li><svg><use href="#i-move16"/></svg></li>
      <li><svg><use href="#i-extrude16"/></svg></li>
      <li><svg><use href="#i-extrude16"/></svg></li>
      <li><svg><use href="#i-extrude16"/></svg></li>
      <li><svg viewBox="0 0 16 16"><circle cx="8" cy="8" r="7.500" fill="#6db7ef" stroke="#3784bd"/><path d="M1 8q7 4 14 0" stroke="#4594cf" fill="none"/></svg></li>
    </ol>
    <svg class="marker" width="12" height="30"><path d="M0 0h12v3L7.500 7v23h-3V7L0 3z" fill="#333"/></svg>
    <button class="settings" aria-label="Timeline settings"><svg width="17" height="17"><use href="#i-gear"/></svg></button>
  </footer>
</div>
</body>
</html>
```

FILE: styles.css
```css
* { box-sizing: border-box; }
body { margin: 0; font: 11px/16px "Noto Sans", "Open Sans", sans-serif; color: #3c3c3c; }
h1, h2, ul, ol { margin: 0; padding: 0; font: inherit; list-style: none; }
button, input, select { font: inherit; color: inherit; margin: 0; padding: 0; border: 0; background: none; border-radius: 0; outline: 0; }
button { display: flex; align-items: center; justify-content: center; }
svg { display: block; flex: none; }
.sprite { position: absolute; width: 0; height: 0; }
.caret { width: 6px; height: 6px; color: #777; }
.app { height: 100vh; display: flex; flex-direction: column; overflow: hidden; background: #f5f5f5; }

.titlebar { flex: none; height: 22px; display: flex; align-items: center; padding-left: 3px; gap: 4px; background: #f3f3f3; color: #858585; }
.window-controls { margin-left: auto; display: flex; }
.window-controls button { width: 44px; height: 22px; }
.window-controls button:last-child { margin-right: 3px; }

.tabbar { flex: none; height: 30px; display: flex; background: #dadada; }
.quick { flex: none; width: 215px; display: flex; align-items: center; padding-left: 8px; gap: 18px; }
.quick button { height: 24px; gap: 8px; }
.quick .undo, .quick .redo { gap: 9px; }
.quick .save { margin-left: -3px; }
.quick .redo { margin-left: -11px; }
.quick .redo .caret { color: #aaa; }
.quick .home { padding-top: 5px; margin-left: -4px; }
.doc-tab { flex: 1; display: flex; align-items: center; margin-top: 4px; padding-right: 4px; background: #f5f5f5; }
.doc-name { flex: 1; display: flex; align-items: center; justify-content: center; gap: 5px; padding-left: 4px; }
.doc-tab button { width: 12px; height: 24px; }
.account { flex: none; width: 223px; display: flex; align-items: center; justify-content: space-between; padding: 0 13px 0 20px; }
.account .add { margin-right: 8px; }

.ribbon { flex: none; height: 80px; display: flex; padding-left: 11px; }
.workspace { flex: none; width: 103px; height: 58px; margin-top: 10px; border: 1px solid #ccc; border-radius: 3px; gap: 6px; font-weight: 600; color: #333; }
.ribbon-main { flex: 1; min-width: 0; padding-left: 5px; }
.tabs { display: flex; gap: 22px; height: 23px; padding: 2px 0 0 11px; }
.tabs a { padding: 0 12px; line-height: 17px; color: #444; text-decoration: none; border-bottom: 3px solid transparent; }
.tabs .active { border-color: #222; }
.groups { display: flex; height: 51px; }
.group { flex: none; border-right: 1px solid #d5d5d5; }
.g-create { width: 252px; }
.g-create .tools { gap: 4px; }
.g-modify { width: 253px; }
.g-pair { width: 98px; }
.g-inspect { width: 91px; }
.g-insert { width: 132px; }
.g-assemble { width: 93px; }
.g-select { width: 75px; border: 0; }
.tools { display: flex; justify-content: center; gap: 5px; height: 35px; }
.tools button { width: 36px; height: 36px; }
.tools svg { width: 32px; height: 32px; }
.tools .selected { background: #d9eef6; border: 1px solid #9fd2e4; }
.tools .fx { font: italic 36px/36px "Liberation Serif", serif; color: #444; }
.menu { width: 100%; height: 18px; gap: 3px; color: #444; }

.viewport { flex: 1; position: relative; min-height: 0; overflow: hidden; background: #fff; }
.scene { width: 100%; height: 100%; }
.dimension { font-size: 14px; text-anchor: middle; fill: #1b3f7a; }
.cube text { font-size: 10px; text-anchor: middle; fill: #777; }
.cube .face { font-size: 9px; font-weight: 600; }
.cube .axis-z { fill: #8a84ea; }
.cube .axis-x { fill: #e88; }
.cube .axis-y { fill: #7ddc8c; }

.bar { display: flex; align-items: center; height: 22px; background: #f5f5f5; box-shadow: 0 0 3px #bbb; padding: 0 11px 0 6px; }
.bar h2 { flex: 1; }
.browser { position: absolute; left: 4px; top: 5px; width: 281px; }
.browser h2 { padding-left: 12px; }
.tree { display: grid; grid-auto-rows: 1fr; height: 249px; margin-top: 3px; }
.tree li { display: flex; align-items: center; gap: 4px; padding-left: 13px; }
.tree .l2 { padding-left: 29px; }
.tree .l3 { padding-left: 66px; }
.chev { width: 16px; height: 16px; }
.ico { width: 24px; height: 17px; }
.node, .item { display: flex; align-items: center; height: 19px; }
.node { background: #f5f5f5; }
.item { gap: 8px; padding-right: 10px; }
.root .item { background: #dcdcdc; }
.tree b { font-weight: 700; color: #333; }
.dashed { background: repeating-linear-gradient(115deg, #3b84bd 0 3px, #f5f5f5 3px 7px) bottom / 100% 3px no-repeat; }
.picked { background: #d8effa; outline: 1px solid #3c9fd2; }
.tree input { appearance: none; width: 13px; height: 13px; border: 1px solid #777; border-radius: 50%; background: radial-gradient(#333 0 2px, #dde 3px); }

.comments { position: absolute; left: 4px; bottom: 4px; width: 281px; padding-left: 26px; }

.value-box { position: absolute; left: 926px; top: 323px; width: 176px; height: 21px; display: flex; background: #f3f3f3; }
.grip { width: 14px; border-right: 1px solid #ddd; background: linear-gradient(90deg, transparent 4px, #ddd 4px 5px, transparent 5px 8px, #ddd 8px 9px, transparent 9px); }
.value-box input { width: 111px; text-align: center; background: #fff; border-bottom: 2px solid #7db8e3; color: #333; }
.value-box button { width: 22px; }
.value-box button:last-child { width: 27px; }

.dialog { position: absolute; right: 4px; top: 95px; width: 234px; background: #f5f5f5; box-shadow: 0 0 3px #bbb; }
.dialog header { display: flex; align-items: center; height: 22px; gap: 8px; padding: 0 6px 0 10px; border-bottom: 1px solid #ddd; }
.dialog h2 { flex: 1; }
.fields { display: grid; grid-template-columns: 78px 113px; grid-auto-rows: 28px; align-items: center; padding: 2px 11px 2px; }
.fields input:not([type="checkbox"]), .select { width: 113px; height: 24px; padding-left: 2px; background: #fff; border: 1px solid #e8e8e8; }
.select { display: flex; align-items: center; gap: 3px; padding-right: 3px; }
.select select { flex: 1; min-width: 0; appearance: none; }
.row { display: flex; align-items: center; }
.selection { width: 79px; height: 25px; gap: 3px; background: #d9eff9; border: 1px solid #3c9fd2; }
.clear { width: 30px; height: 24px; }
.types { gap: 5px; }
.types button { flex: none; width: 22px; height: 25px; }
.types .on { background: #d9eff9; border: 1px solid #a5cde0; }
.off { color: #b5b5b5; }
.fields input[type="checkbox"] { appearance: none; width: 11px; height: 11px; margin-left: 5px; border: 1px solid #ddd; background: #f9f9f9; }
.dialog footer { display: flex; align-items: center; height: 34px; padding: 0 13px 0 7px; border-top: 1px solid #ddd; }
.dialog footer button { width: 41px; height: 23px; margin-left: auto; border: 1px solid #bbb; }
.dialog footer .cancel { width: 59px; margin-left: 13px; }

.navbar { position: absolute; left: 50%; bottom: 5px; width: 222px; margin-left: -111px; height: 24px; display: flex; align-items: center; justify-content: space-between; background: #f7f7f7; }
.navbar .has-menu { gap: 5px; }
.navbar .tight { gap: 2px; }
.status { position: absolute; right: 12px; bottom: 7px; display: flex; align-items: center; gap: 15px; color: #222; }
.status b { font-weight: 700; }

.timeline { flex: none; height: 47px; display: flex; align-items: flex-start; padding: 10px 12px 0 9px; }
.playback { display: flex; align-items: center; gap: 12px; height: 26px; }
.features { display: flex; margin-left: 16px; }
.features li { position: relative; width: 23px; height: 29px; padding-top: 5px; }
.features svg { width: 16px; height: 16px; margin: 0 auto; }
.features li::after { content: ""; position: absolute; left: 11px; bottom: 0; width: 23px; height: 5px; border-left: 1px solid #aaa; border-bottom: 1px solid #aaa; }
.features li:last-child::after { width: 1px; }
.marker { margin-left: -8px; }
.settings { margin-left: auto; height: 26px; }
```
